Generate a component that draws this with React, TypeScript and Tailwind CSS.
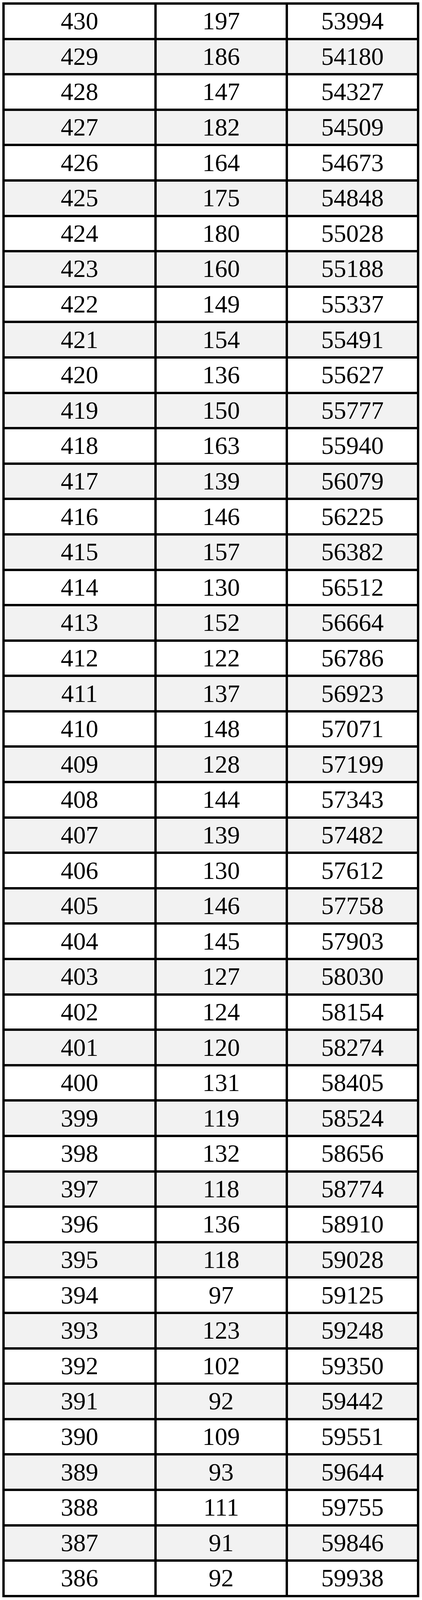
import React from "react";

const rows: [number, number, number][] = [
  [430, 197, 53994],[429, 186, 54180],[428, 147, 54327],[427, 182, 54509],[426, 164, 54673],
  [425, 175, 54848],[424, 180, 55028],[423, 160, 55188],[422, 149, 55337],[421, 154, 55491],
  [420, 136, 55627],[419, 150, 55777],[418, 163, 55940],[417, 139, 56079],[416, 146, 56225],
  [415, 157, 56382],[414, 130, 56512],[413, 152, 56664],[412, 122, 56786],[411, 137, 56923],
  [410, 148, 57071],[409, 128, 57199],[408, 144, 57343],[407, 139, 57482],[406, 130, 57612],
  [405, 146, 57758],[404, 145, 57903],[403, 127, 58030],[402, 124, 58154],[401, 120, 58274],
  [400, 131, 58405],[399, 119, 58524],[398, 132, 58656],[397, 118, 58774],[396, 136, 58910],
  [395, 118, 59028],[394, 97, 59125],[393, 123, 59248],[392, 102, 59350],[391, 92, 59442],
  [390, 109, 59551],[389, 93, 59644],[388, 111, 59755],[387, 91, 59846],[386, 92, 59938],
];

export default function App() {
  return (
    <div className="w-[1080px] min-h-[4096px] bg-white pt-[6px] pl-[6px]">
      <div
        className="grid w-[1067px] grid-cols-[383px_330px_330px] auto-rows-[84.6px] gap-[6px] border-[6px] border-black bg-black text-black"
        style={{ fontFamily: '"Liberation Serif", "Times New Roman", serif' }}
      >
        {rows.map((r, i) =>
          r.map((v, j) => (
            <div
              key={`${i}-${j}`}
              className={`flex items-center justify-center text-[64px] leading-none ${
                i % 2 === 1 ? "bg-[#f2f2f2]" : "bg-white"
              }`}
            >
              {v}
            </div>
          ))
        )}
      </div>
    </div>
  );
}
